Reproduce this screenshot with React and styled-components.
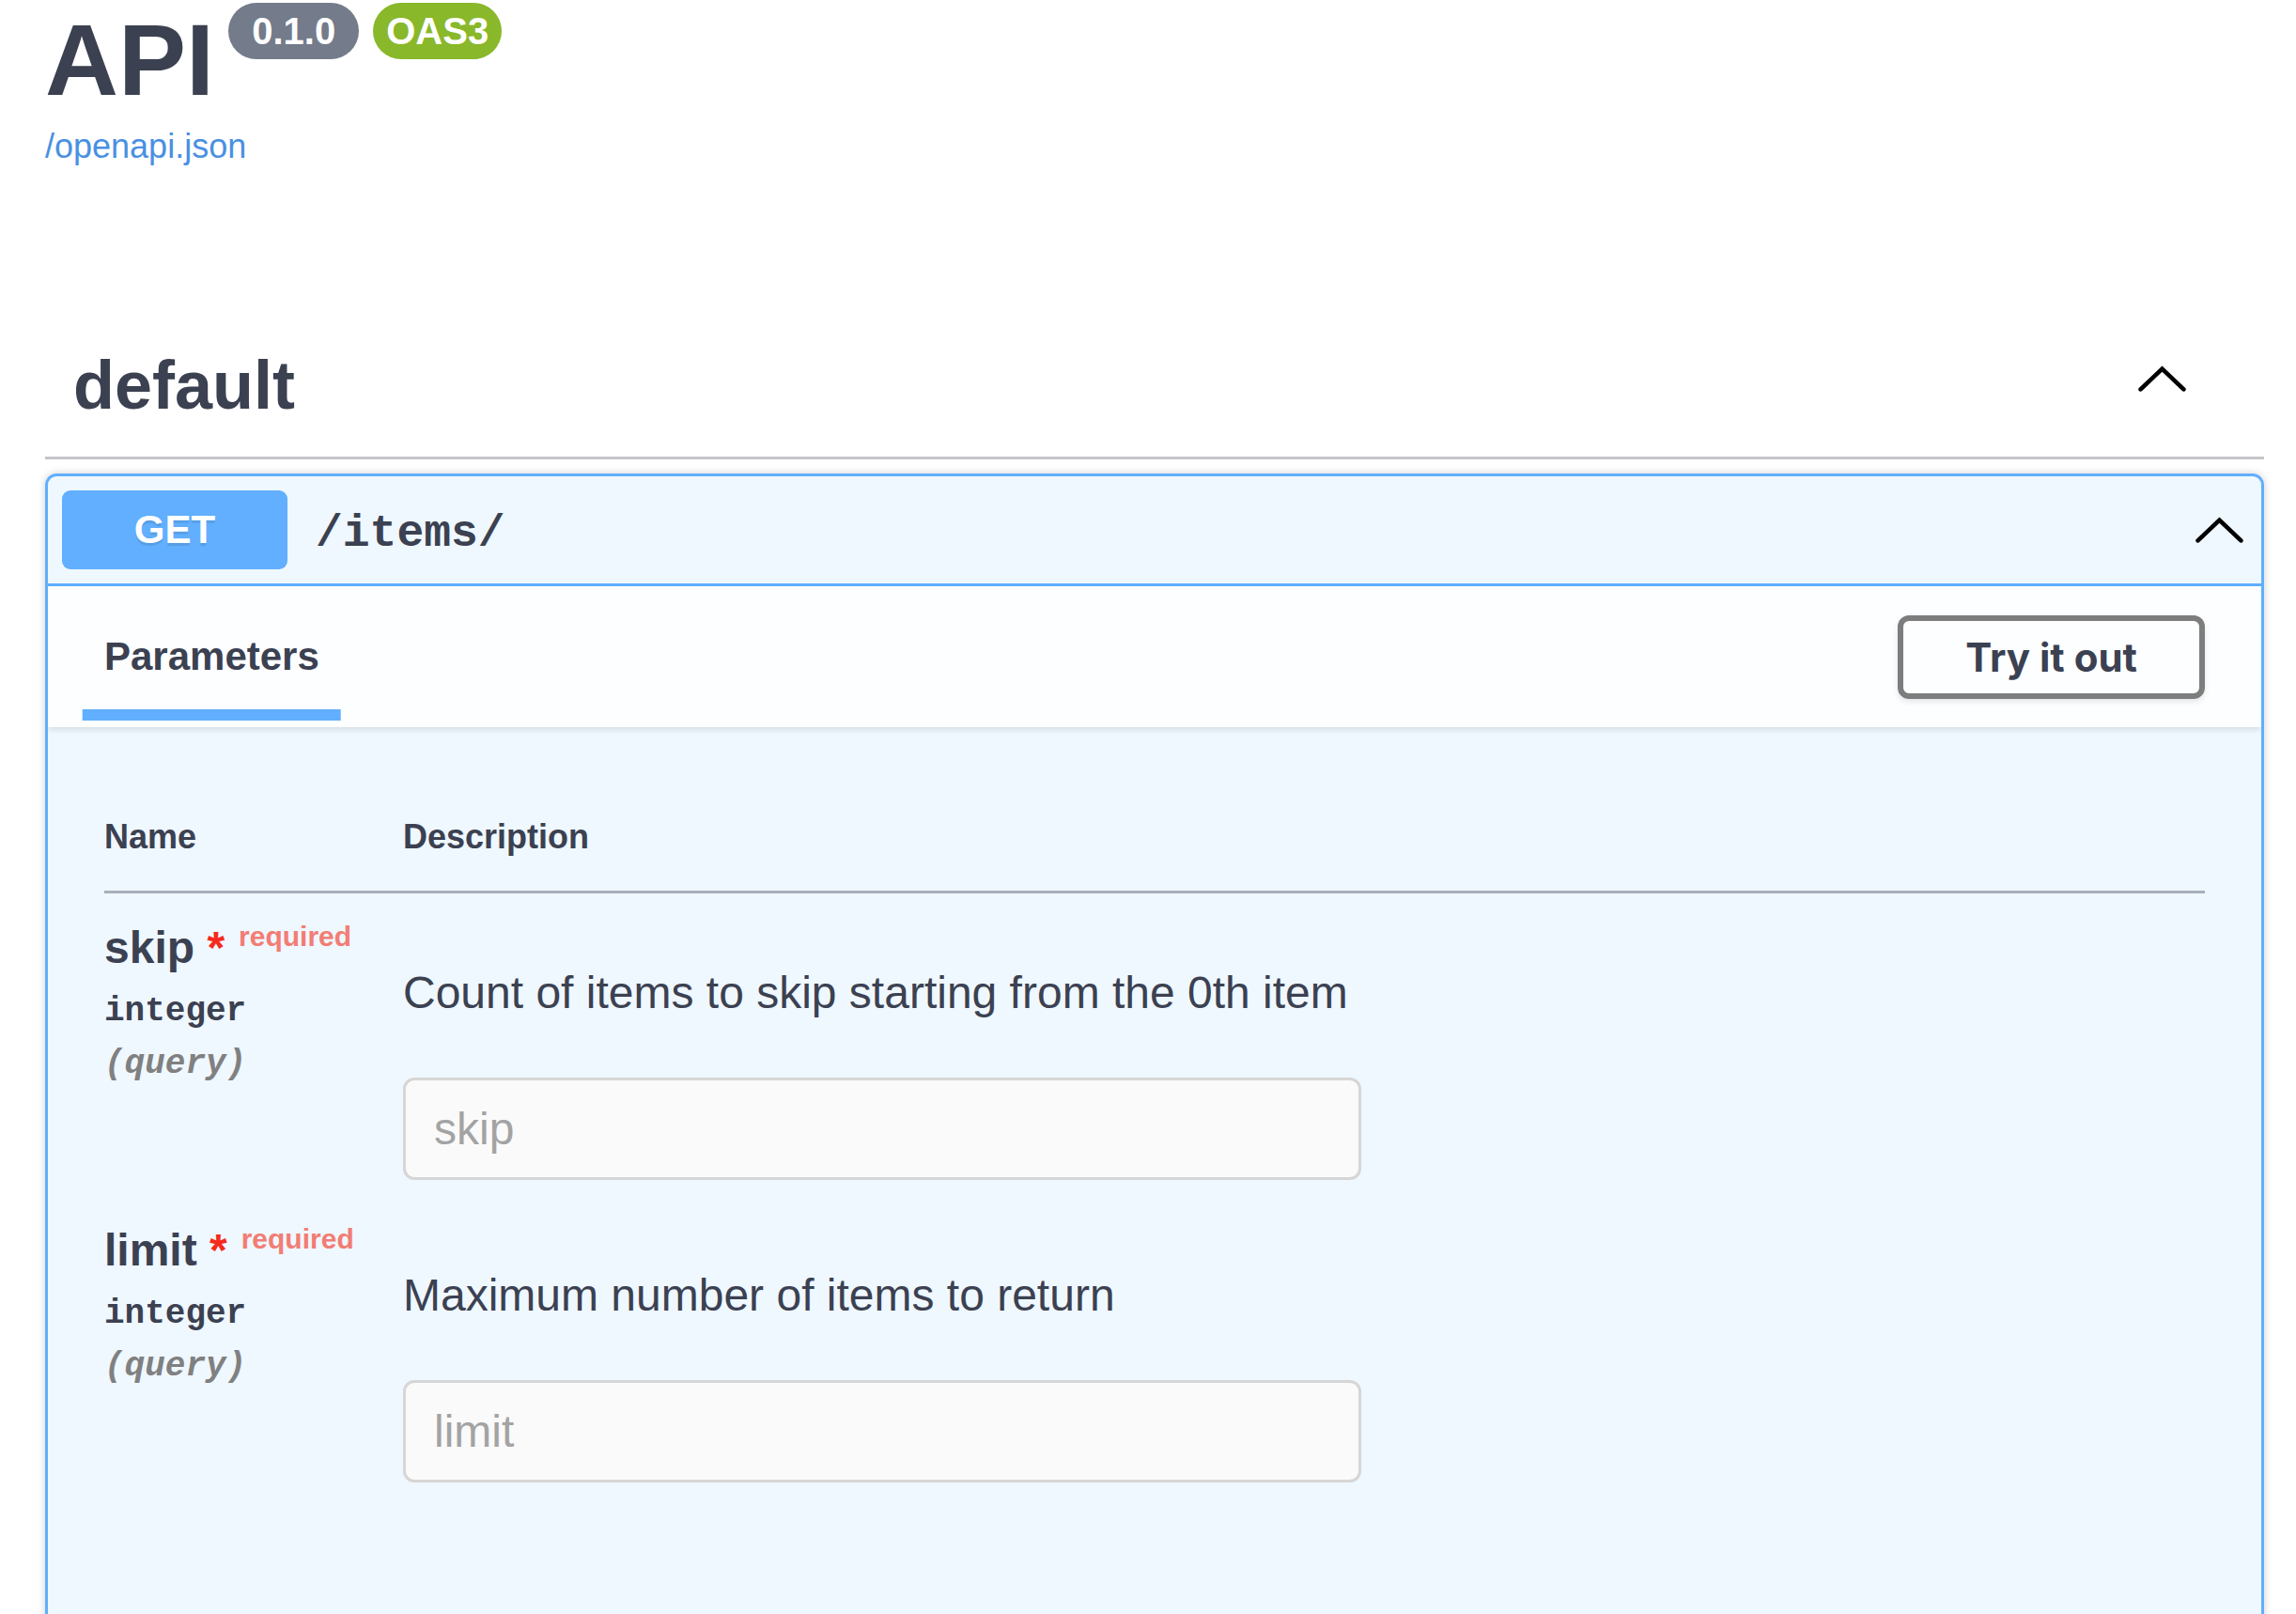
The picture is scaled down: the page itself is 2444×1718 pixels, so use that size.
import React from "react";
import styled, { createGlobalStyle } from "styled-components";

const GlobalStyle = createGlobalStyle`
  html, body {
    margin: 0;
    padding: 0;
    background: #fff;
    overflow: hidden;
  }
  body {
    font-family: "Liberation Sans", Arial, sans-serif;
    color: #3b4151;
  }
`;

const Page = styled.div`
  padding: 0 34px 0 48px;
`;

// info block
const TitleRow = styled.div`
  display: flex;
  align-items: flex-start;
`;

const Title = styled.h2`
  margin: 1px 0 0;
  font-size: 108px;
  font-weight: 700;
  line-height: normal;
  color: #3b4151;
`;

const Badge = styled.pre`
  margin: 3px 0 0 15px;
  padding: 7px 14px;
  border-radius: 171px;
  background: ${(p) => p.$bg};
  color: #fff;
  font-family: "Liberation Sans", Arial, sans-serif;
  font-size: 40px;
  font-weight: 700;
  line-height: 46px;
  white-space: pre;
`;

const SpecLink = styled.a`
  display: block;
  width: fit-content;
  margin-top: 9px;
  font-size: 36px;
  line-height: normal;
  color: #4990e2;
  text-decoration: none;
`;

// tag
const TagSection = styled.section`
  margin-top: 164px;
`;

const TagHeader = styled.div`
  display: flex;
  align-items: center;
  padding: 28px 60px 35px 30px;
  border-bottom: 3px solid rgba(59, 65, 81, 0.3);
  margin-bottom: 15px;
`;

const TagTitle = styled.h3`
  flex: 1;
  margin: 0;
  font-size: 72px;
  font-weight: 700;
  line-height: normal;
  color: #3b4151;
`;

const ChevronSvg = styled.svg`
  flex: none;
  display: block;
  margin-right: ${(p) => p.$mr}px;
  margin-bottom: ${(p) => p.$mb || 0}px;
`;

function Chevron({ mr, mb }) {
  return (
    <ChevronSvg $mr={mr} $mb={mb} width="51" height="28" viewBox="0 0 51 28">
      <polyline
        points="2.6,25.4 25.5,3.6 48.4,25.4"
        fill="none"
        stroke="#000"
        strokeWidth="4.6"
        strokeLinecap="round"
        strokeLinejoin="miter"
      />
    </ChevronSvg>
  );
}

// operation block
const Opblock = styled.div`
  border: 3px solid #61affe;
  border-radius: 12px;
  background: rgba(97, 175, 254, 0.1);
  box-shadow: 0 0 9px rgba(0, 0, 0, 0.19);
  overflow: hidden;
`;

const Summary = styled.div`
  display: flex;
  align-items: center;
  padding: 15px;
  border-bottom: 3px solid #61affe;
`;

const Method = styled.span`
  min-width: 240px;
  padding: 18px 0;
  border-radius: 9px;
  background: #61affe;
  color: #fff;
  font-size: 42px;
  font-weight: 700;
  line-height: normal;
  text-align: center;
  text-shadow: 0 3px 0 rgba(0, 0, 0, 0.1);
`;

const Path = styled.span`
  flex: 1;
  padding: 8px 30px 0;
  font-family: "Liberation Mono", "Courier New", monospace;
  font-size: 48px;
  font-weight: 700;
  line-height: normal;
  color: #3b4151;
`;

const SectionHeader = styled.div`
  display: flex;
  align-items: center;
  box-sizing: border-box;
  min-height: 150px;
  padding: 24px 60px;
  background: rgba(255, 255, 255, 0.8);
  box-shadow: 0 3px 6px rgba(0, 0, 0, 0.1);
`;

const TabTitle = styled.h4`
  flex: 1;
  margin: 0;
  font-size: 42px;
  font-weight: 700;
  line-height: normal;
  color: #3b4151;
  span {
    position: relative;
  }
  span::after {
    content: "";
    position: absolute;
    left: 50%;
    bottom: -45px;
    width: 120%;
    height: 12px;
    transform: translateX(-50%);
    background: #61affe;
  }
`;

const TryButton = styled.button`
  padding: 15px 66px;
  border: 6px solid #7d7d7d;
  border-radius: 12px;
  background: transparent;
  box-shadow: 0 3px 6px rgba(0, 0, 0, 0.1);
  font-family: Inter, "Liberation Sans", sans-serif;
  font-size: 42px;
  font-weight: 700;
  line-height: 47px;
  color: #3b4151;
`;

const TableContainer = styled.div`
  padding: 60px 60px 220px;
`;

const ParamTable = styled.table`
  width: 100%;
  border-collapse: collapse;
  table-layout: fixed;
  th {
    padding: 36px 0;
    border-bottom: 3px solid #a9afbb;
    font-size: 36px;
    font-weight: 700;
    line-height: normal;
    text-align: left;
    color: #3b4151;
  }
  th:first-child {
    width: 318px;
  }
  td {
    padding: 30px 0 2px;
    vertical-align: top;
  }
`;

const ParamName = styled.div`
  font-size: 48px;
  font-weight: 700;
  line-height: normal;
  color: #3b4151;
  &::after {
    content: "required";
    position: relative;
    top: -18px;
    padding: 15px;
    font-size: 30px;
    color: #f27d74;
  }
`;

const Star = styled.span`
  color: #f52a1c;
`;

const ParamType = styled.div`
  padding: 20px 0 15px;
  font-family: "Liberation Mono", "Courier New", monospace;
  font-size: 36px;
  font-weight: 700;
  line-height: normal;
  color: #3b4151;
`;

const ParamIn = styled.div`
  font-family: "Liberation Mono", "Courier New", monospace;
  font-size: 36px;
  font-weight: 700;
  font-style: italic;
  line-height: normal;
  color: gray;
`;

const Description = styled.p`
  margin: 48px 0 63px;
  font-size: 48px;
  line-height: normal;
  color: #3b4151;
`;

const ParamInput = styled.input`
  display: block;
  box-sizing: border-box;
  width: 1020px;
  margin: 0 0 15px;
  padding: 24px 30px;
  border: 3px solid #d6d6d6;
  border-radius: 12px;
  background: #fafafa;
  font-family: "Liberation Sans", Arial, sans-serif;
  font-size: 48px;
  line-height: normal;
  color: #888;
  &::placeholder {
    color: #a3a3a3;
  }
`;

const params = [
  { name: "skip", desc: "Count of items to skip starting from the 0th item" },
  { name: "limit", desc: "Maximum number of items to return" },
];

export default function App() {
  return (
    <>
      <GlobalStyle />
      <Page>
        <div>
          <TitleRow>
            <Title>API</Title>
            <Badge $bg="#747b8a">{" 0.1.0 "}</Badge>
            <Badge $bg="#89b82a">OAS3</Badge>
          </TitleRow>
          <SpecLink href="#">/openapi.json</SpecLink>
        </div>

        <TagSection>
          <TagHeader>
            <TagTitle>default</TagTitle>
            <Chevron mr={23} mb={14} />
          </TagHeader>

          <Opblock>
            <Summary>
              <Method>GET</Method>
              <Path>/items/</Path>
              <Chevron mr={4} />
            </Summary>

            <SectionHeader>
              <TabTitle>
                <span>Parameters</span>
              </TabTitle>
              <TryButton>Try it out</TryButton>
            </SectionHeader>

            <TableContainer>
              <ParamTable>
                <thead>
                  <tr>
                    <th>Name</th>
                    <th>Description</th>
                  </tr>
                </thead>
                <tbody>
                  {params.map((p) => (
                    <tr key={p.name}>
                      <td>
                        <ParamName>
                          {p.name}
                          <Star>{"\u00a0*"}</Star>
                        </ParamName>
                        <ParamType>integer</ParamType>
                        <ParamIn>(query)</ParamIn>
                      </td>
                      <td>
                        <Description>{p.desc}</Description>
                        <ParamInput type="text" placeholder={p.name} disabled />
                      </td>
                    </tr>
                  ))}
                </tbody>
              </ParamTable>
            </TableContainer>
          </Opblock>
        </TagSection>
      </Page>
    </>
  );
}
